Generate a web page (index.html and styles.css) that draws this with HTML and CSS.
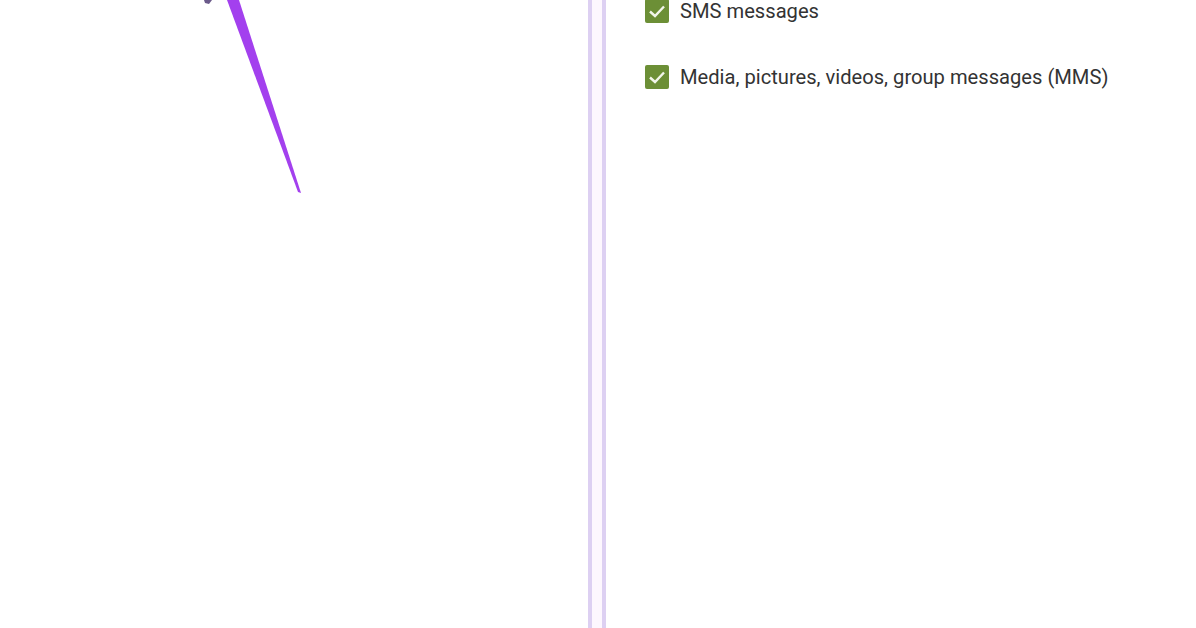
FILE: index.html
```html
<!DOCTYPE html>
<html>
<head>
<meta charset="utf-8">
<link rel="stylesheet" href="styles.css">
</head>
<body>
<div class="page">
  <div class="left">
    <svg class="arrow" width="320" height="200" viewBox="0 0 320 200">
      <path d="M227 0 L239 0 L301 193 L298 192 Z" fill="#a340ee"/>
      <path d="M204 0 L212 0 L209 4 L205 3 Z" fill="#6b5a8a"/>
    </svg>
  </div>
  <div class="divider"><div class="gap"></div></div>
  <div class="right">
    <div class="option first">
      <span class="box"><svg viewBox="0 0 24 24" width="24" height="24"><path d="M5 12.5 L10 17 L19 7.5" fill="none" stroke="#f2f6ea" stroke-width="2.4"/></svg></span>
      <span class="label">SMS messages</span>
    </div>
    <div class="option">
      <span class="box"><svg viewBox="0 0 24 24" width="24" height="24"><path d="M5 12.5 L10 17 L19 7.5" fill="none" stroke="#f2f6ea" stroke-width="2.4"/></svg></span>
      <span class="label">Media, pictures, videos, group messages (MMS)</span>
    </div>
  </div>
</div>
</body>
</html>
```
FILE: styles.css
```css
html, body {
  margin: 0;
  padding: 0;
  background: #ffffff;
  overflow: hidden;
}
.page {
  width: 1196px;
  height: 628px;
  display: flex;
}
.left {
  width: 588px;
  flex: none;
  position: relative;
}
.arrow {
  display: block;
}
.divider {
  box-sizing: border-box;
  width: 18px;
  flex: none;
  border-left: 4px solid #ddd0f2;
  border-right: 4px solid #ddd0f2;
  display: flex;
}
.gap {
  flex: 1;
  background: #fdf7fe;
}
.right {
  flex: 1;
  padding-left: 39px;
  margin-top: -1px;
  font-family: Roboto, "Noto Sans", sans-serif;
  color: #333333;
}
.option {
  display: flex;
  align-items: center;
  gap: 11px;
  height: 24px;
}
.option + .option {
  margin-top: 42px;
}
.box {
  width: 24px;
  height: 24px;
  border-radius: 2px;
  background: #6c8f36;
  display: flex;
  flex: none;
}
.label {
  font-size: 20.15px;
  line-height: 24px;
}
```
